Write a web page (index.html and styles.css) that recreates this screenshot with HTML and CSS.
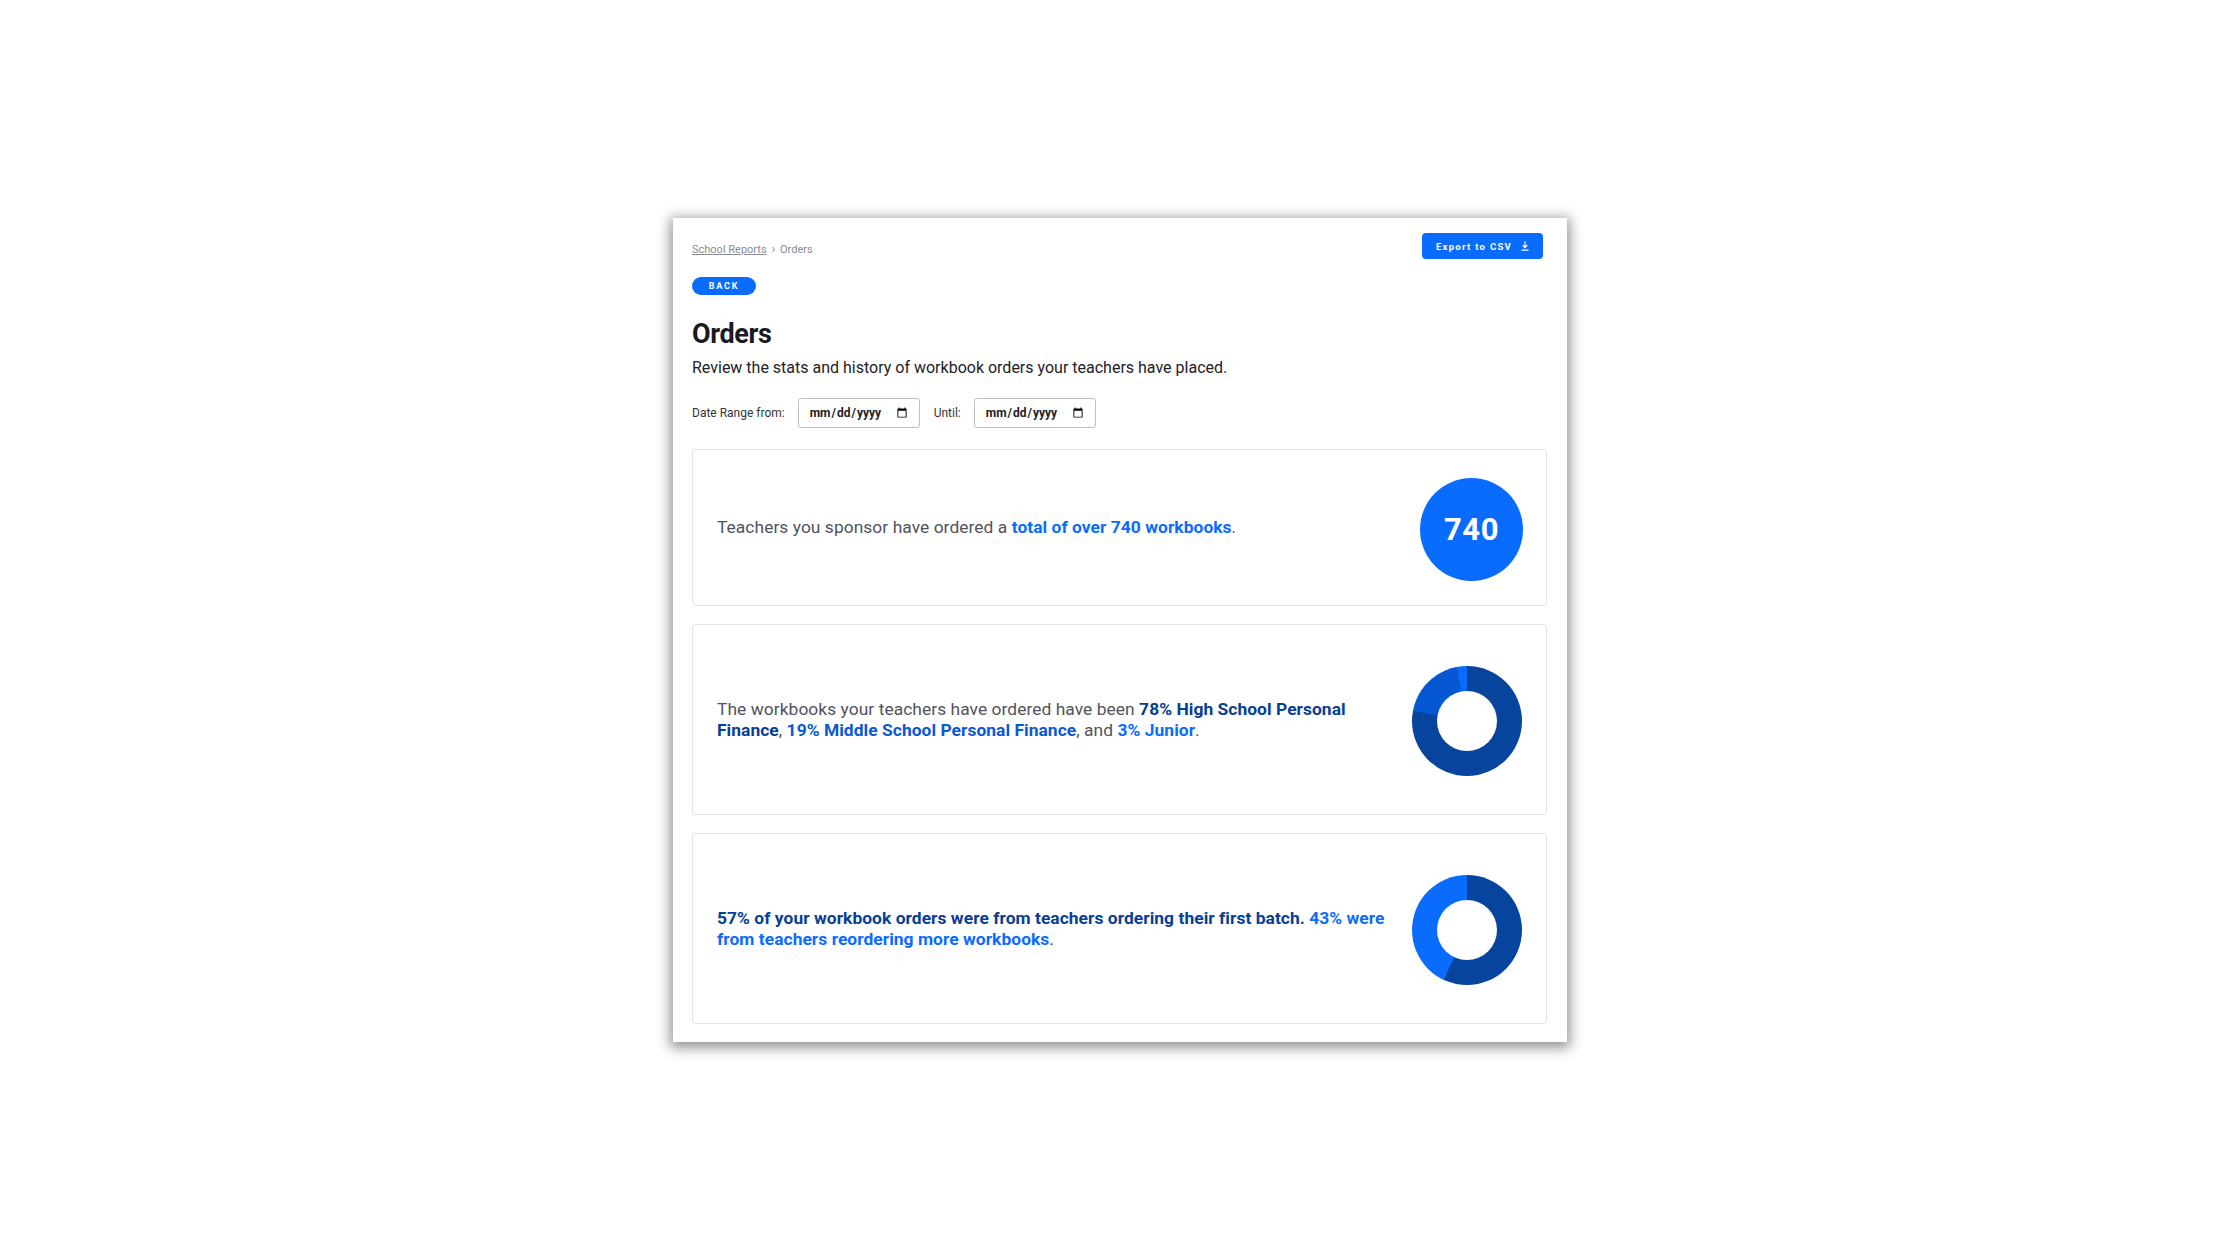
FILE: index.html
```html
<!DOCTYPE html>
<html>

<head>
  <meta name="viewport" content="width=device-width, initial-scale=1">
  <link rel="stylesheet" href="styles.css">
</head>

<body>

  <div class="report">
    <div class="report-top">
      <nav class="crumbs">
        <a href="#">School Reports</a>
        <span class="crumb-sep">&rsaquo;</span>
        <span>Orders</span>
      </nav>
      <button class="export-btn">Export to CSV
        <svg width="8" height="10" viewBox="0 0 8 10">
          <path d="M4 0.5v6M1.6 4.2L4 6.6L6.4 4.2M0.5 9.2h7" fill="none" stroke="#fff" stroke-width="1.2" />
        </svg>
      </button>
    </div>

    <button class="back-btn">BACK</button>

    <h1>Orders</h1>
    <p class="lead">Review the stats and history of workbook orders your teachers have placed.</p>

    <div class="date-range">
      <label for="from">Date Range from:</label>
      <input type="date" id="from">
      <label for="until">Until:</label>
      <input type="date" id="until">
    </div>

    <div class="stat-card stat-card--short">
      <p class="stat-text">Teachers you sponsor have ordered a <strong class="c-bright">total of over 740 workbooks</strong>.</p>
      <div class="total-badge">740</div>
    </div>

    <div class="stat-card">
      <p class="stat-text">The workbooks your teachers have ordered have been <strong class="c-navy">78% High School Personal Finance</strong>, <strong class="c-mid">19% Middle School Personal Finance</strong>, and <strong class="c-bright">3% Junior</strong>.</p>
      <div class="donut donut--three" style="--a: 78%; --b: 97%"></div>
    </div>

    <div class="stat-card">
      <p class="stat-text"><strong class="c-navy">57% of your workbook orders were from teachers ordering their first batch.</strong> <strong class="c-bright">43% were from teachers reordering more workbooks</strong><span class="c-navy">.</span></p>
      <div class="donut donut--two" style="--a: 57%"></div>
    </div>
  </div>

</body>

</html>
```

FILE: styles.css
```css
html,
body {
  margin: 0;
  height: 100%;
}

body {
  display: flex;
  align-items: center;
  justify-content: center;
  background: #fff;
  font-family: Roboto, "Liberation Sans", sans-serif;
  color: #1d1d24;
}

.report {
  width: 894px;
  box-sizing: border-box;
  padding: 15px 20px 18px 19px;
  background: #fff;
  box-shadow: 0 3px 12px 3px rgba(0, 0, 0, 0.42);
}

.report-top {
  display: flex;
  justify-content: space-between;
  align-items: flex-start;
}

.crumbs {
  margin-top: 9px;
  font-size: 11px;
  line-height: 14px;
  color: #8a8a90;
}

.crumbs a {
  color: #8a8a90;
}

.crumb-sep {
  margin: 0 2px;
  font-size: 13px;
}

.export-btn {
  display: flex;
  align-items: center;
  gap: 9px;
  height: 26px;
  width: 121px;
  margin-right: 4px;
  justify-content: center;
  padding: 0;
  border: 0;
  border-radius: 4px;
  background: #0a6cff;
  color: #fff;
  font-family: Roboto, "Liberation Sans", sans-serif;
  font-weight: 700;
  font-size: 9.5px;
  letter-spacing: 1.3px;
}

.back-btn {
  display: block;
  margin-top: 18px;
  width: 64px;
  height: 18px;
  padding: 0;
  border: 0;
  border-radius: 9px;
  background: #0a6cff;
  color: #fff;
  font-family: Roboto, "Liberation Sans", sans-serif;
  font-weight: 700;
  font-size: 9px;
  letter-spacing: 1.8px;
}

h1 {
  margin: 23px 0 0;
  font-size: 27px;
  line-height: 32px;
  letter-spacing: -0.4px;
  color: #1b1a22;
}

.lead {
  margin: 8px 0 0;
  font-size: 16px;
  line-height: 20px;
  color: #222228;
}

.date-range {
  display: flex;
  align-items: center;
  margin-top: 20px;
  font-size: 12px;
  color: #333338;
}

.date-range label {
  margin-right: 13px;
}

.date-range input {
  width: 122px;
  height: 30px;
  box-sizing: border-box;
  margin-right: 14px;
  padding: 0 9px 0 10px;
  border: 1px solid #bdbdc2;
  border-radius: 3px;
  font-family: Roboto, "Liberation Sans", sans-serif;
  font-weight: 700;
  font-size: 12px;
  color: #1d1d24;
}

.stat-card {
  display: flex;
  align-items: center;
  gap: 20px;
  margin-top: 18px;
  min-height: 191px;
  box-sizing: border-box;
  padding: 0 24px 0 24px;
  border: 1px solid #e2e2e5;
  border-radius: 4px;
}

.date-range + .stat-card {
  margin-top: 21px;
}

.stat-card--short {
  min-height: 157px;
  padding-right: 23px;
}

.stat-text {
  flex: 1;
  margin: 0;
  font-size: 17.4px;
  line-height: 21px;
  letter-spacing: 0.05px;
  color: #50535e;
}

.stat-text strong {
  font-weight: 700;
}

.c-navy {
  color: #083e96;
}

.c-mid {
  color: #0a58d6;
}

.c-bright {
  color: #0a6cff;
}

.total-badge {
  display: flex;
  align-items: center;
  justify-content: center;
  width: 103px;
  height: 103px;
  margin-top: 4px;
  border-radius: 50%;
  background: #0a6cff;
  color: #fff;
  font-weight: 700;
  font-size: 31px;
  letter-spacing: 0.5px;
}

.donut {
  position: relative;
  width: 110px;
  height: 110px;
  margin-top: 3px;
  border-radius: 50%;
}

.donut::after {
  content: "";
  position: absolute;
  inset: 25px;
  border-radius: 50%;
  background: #fff;
}

.donut--three {
  background: conic-gradient(#07449e 0 var(--a), #0558d2 var(--a) var(--b), #0a6cff var(--b) 100%);
}

.donut--two {
  background: conic-gradient(#07449e 0 var(--a), #0a6cff var(--a) 100%);
}
```
